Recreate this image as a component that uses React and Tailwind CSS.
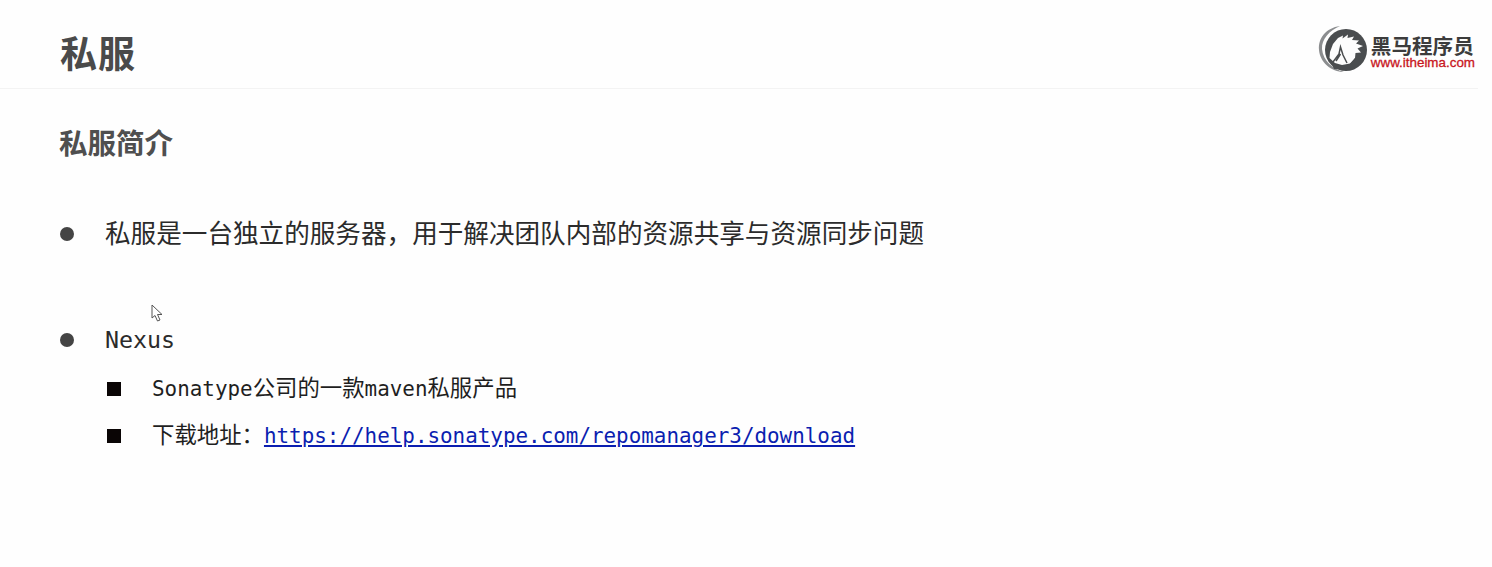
const cjkClass = "font-['Noto_Sans_CJK_SC',sans-serif]";

// Logo : tête de cheval blanche sur disque sombre + texte
function Logo() {
  return (
    <div className="flex items-center -mt-[6px]">
      <svg width="60" height="55" viewBox="0 0 60 55" className="shrink-0">
        <path d="M28 4 C14 6 6 16 7 28 C8 40 19 50 32 50 C21 47 11 39 10 27 C9.5 17 17 9 28 4 Z" fill="#8b8d8f" />
        <circle cx="34" cy="28" r="21" fill="#4a4d4f" />
        <path d="M17.5 36 L18 30 L21 22 L26 16 L31 13.5 L30.5 16.5 L36 12.5 L35.5 16 L42 14.5 L40 18 L47 18.5 L44 21.5 L51 24 L45.5 26.5 L49 30.5 L43.5 31 L43 36 L38 41.5 L30 43 L23 41 Z" fill="#fdfdfd" />
        <path d="M21 40 L27 32 L28.5 25 L31 33 L35 41 M28.5 32 L24 39" fill="none" stroke="#4a4d4f" strokeWidth="1.5" />
        <path d="M17 36 C19 41 24 44 30 44 C36 44 40 41 43 36 L43 47 L22 47 Z" fill="#4a4d4f" />
      </svg>
      <div className="-ml-[1px] flex flex-col pt-[6px]">
        <span className={`${cjkClass} text-[20.6px] leading-[19px] font-bold text-[#3c3c3c] whitespace-nowrap`}>
          黑马程序员
        </span>
        <span className="font-['Liberation_Sans',sans-serif] text-[13.4px] leading-[15px] text-[#c8161d] whitespace-nowrap [-webkit-text-stroke:0.3px_#c8161d]">
          www.itheima.com
        </span>
      </div>
    </div>
  );
}

function Puce({ carre, children, className }) {
  return (
    <li className={`flex items-center ${className}`}>
      {carre ? (
        <span className="w-[14px] h-[14px] bg-[#0a0505] shrink-0 ml-[107px] mr-[31px]" />
      ) : (
        <span className="w-[14px] h-[14px] rounded-full bg-[#444444] shrink-0 ml-[60px] mr-[31px]" />
      )}
      {children}
    </li>
  );
}

// Les sinogrammes sont un peu plus larges que la police mono à cette taille
function Zh({ children }) {
  return <span className="text-[22.4px]">{children}</span>;
}

export default function App() {
  return (
    <div className="relative w-[1492px] h-[567px] bg-[#fefefe] overflow-hidden font-['DejaVu_Sans_Mono','Noto_Sans_CJK_SC',monospace]">
      <header className="w-[1478px] h-[89px] border-b border-[#f3f3f3] flex items-center justify-between pl-[60px] pr-[3px] pt-[17px]">
        <h1 className={`${cjkClass} text-[37px] leading-none font-bold tracking-[1px] text-[#4a4a4a]`}>
          私服
        </h1>
        <Logo />
      </header>

      <h2 className={`${cjkClass} text-[28.5px] leading-[40px] font-bold text-[#4f4f4f] ml-[59px] mt-[33px]`}>
        私服简介
      </h2>

      <ul>
        <Puce className="mt-[52px] h-[40px]">
          <span className="text-[25.6px] text-[#2b2b2b] whitespace-nowrap">
            私服是一台独立的服务器，用于解决团队内部的资源共享与资源同步问题
          </span>
        </Puce>
        <Puce className="mt-[66px] h-[40px]">
          <span className="text-[23.3px] text-[#2b2b2b]">Nexus</span>
        </Puce>
        <Puce carre className="mt-[9px] h-[40px]">
          <span className="text-[20.9px] text-[#1f1f1f] whitespace-nowrap">
            Sonatype<Zh>公司的一款</Zh>maven<Zh>私服产品</Zh>
          </span>
        </Puce>
        <Puce carre className="mt-[7px] h-[40px]">
          <span className="text-[20.9px] text-[#1f1f1f] whitespace-nowrap">
            <Zh>下载地址：</Zh>
            <a href="#" className="text-[#0b1eb0] underline">
              https://help.sonatype.com/repomanager3/download
            </a>
          </span>
        </Puce>
      </ul>

      {/* curseur de la souris */}
      <svg width="13" height="19" viewBox="0 0 13 19" className="absolute left-[151px] top-[304px]">
        <path d="M1 1 L1 14 L4 11.5 L6.5 17 L9 16 L6.5 10.5 L11 10.5 Z" fill="#fff" stroke="#555" strokeWidth="1" />
      </svg>
    </div>
  );
}
